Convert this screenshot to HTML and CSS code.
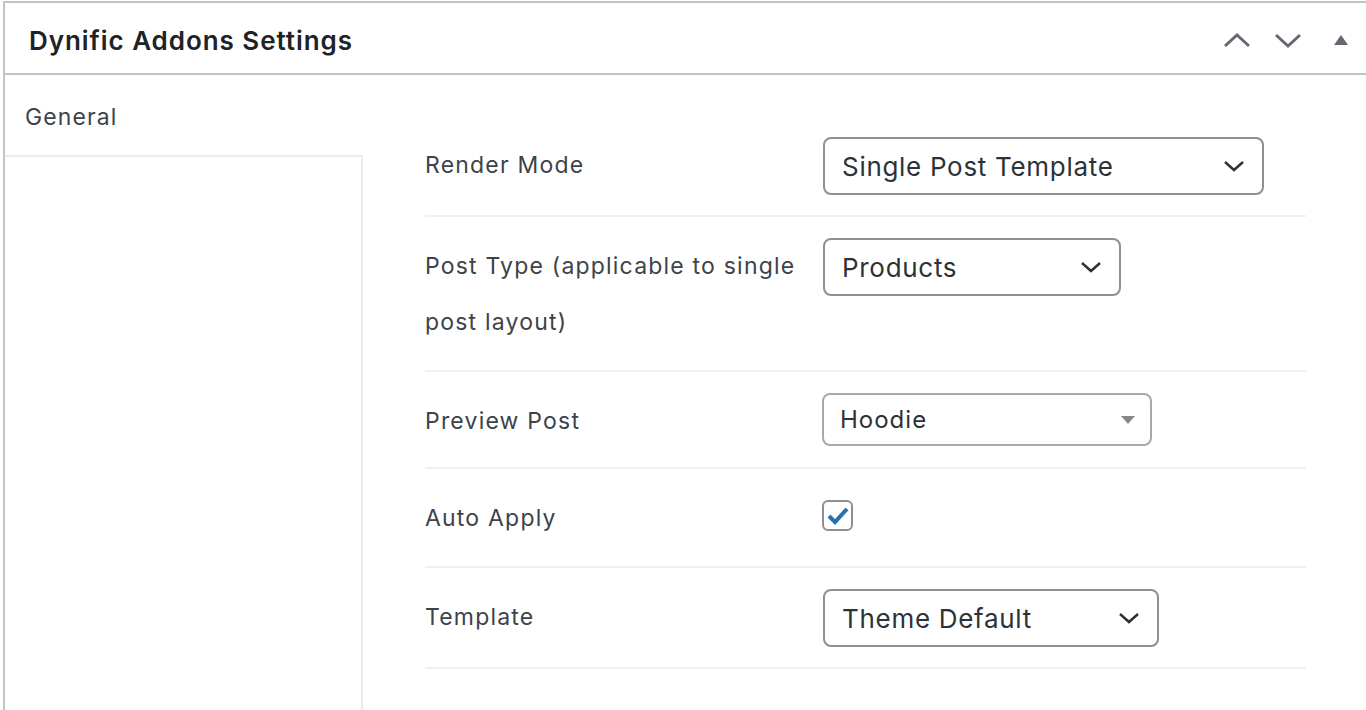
FILE: index.html
```html
<!DOCTYPE html>
<html lang="en">
<head>
  <meta charset="UTF-8">
  <meta name="viewport" content="width=device-width, initial-scale=1.0">
  <title>Dynific Addons Settings</title>
  <link rel="stylesheet" href="styles.css">
</head>
<body>
  <div class="postbox">
    <div class="postbox-header">
      <h2 class="postbox-title">Dynific Addons Settings</h2>
      <div class="handle-actions">
        <!-- move up / move down / toggle -->
        <svg class="handle" width="30" height="20" viewBox="0 0 30 20"><path d="M3 16 L15 5 L27 16" fill="none" stroke="#646970" stroke-width="3"/></svg>
        <svg class="handle" width="30" height="20" viewBox="0 0 30 20"><path d="M3 5 L15 16 L27 5" fill="none" stroke="#646970" stroke-width="3"/></svg>
        <svg class="handle toggle" width="18" height="20" viewBox="0 0 18 20"><path d="M2 15 L9 5 L16 15 Z" fill="#646970"/></svg>
      </div>
    </div>

    <div class="inside">
      <ul class="tabs">
        <li class="tab active">General</li>
        <li class="tabs-fill"></li>
      </ul>

      <div class="panel">
        <div class="field">
          <label class="field-label">Render Mode</label>
          <div class="field-input">
            <div class="select w-440">
              <span>Single Post Template</span>
              <svg width="22" height="14" viewBox="0 0 22 14"><path d="M2 3 L11 11 L20 3" fill="none" stroke="#2c3338" stroke-width="2.5"/></svg>
            </div>
          </div>
        </div>

        <div class="field">
          <label class="field-label">Post Type (applicable to single post layout)</label>
          <div class="field-input">
            <div class="select w-297">
              <span>Products</span>
              <svg width="22" height="14" viewBox="0 0 22 14"><path d="M2 3 L11 11 L20 3" fill="none" stroke="#2c3338" stroke-width="2.5"/></svg>
            </div>
          </div>
        </div>

        <div class="field field-short">
          <label class="field-label">Preview Post</label>
          <div class="field-input">
            <div class="select select2 w-329">
              <span>Hoodie</span>
              <svg width="16" height="10" viewBox="0 0 16 10"><path d="M1 1 L15 1 L8 9 Z" fill="#888888"/></svg>
            </div>
          </div>
        </div>

        <div class="field">
          <label class="field-label">Auto Apply</label>
          <div class="field-input">
            <span class="checkbox">
              <svg width="24" height="22" viewBox="0 0 24 22"><path d="M3 11 L9 17 L21 4" fill="none" stroke="#2271b1" stroke-width="4"/></svg>
            </span>
          </div>
        </div>

        <div class="field">
          <label class="field-label">Template</label>
          <div class="field-input">
            <div class="select w-335">
              <span>Theme Default</span>
              <svg width="22" height="14" viewBox="0 0 22 14"><path d="M2 3 L11 11 L20 3" fill="none" stroke="#2c3338" stroke-width="2.5"/></svg>
            </div>
          </div>
        </div>
      </div>
    </div>
  </div>
</body>
</html>
```

FILE: styles.css
```css
body, html {
  margin: 0;
  padding: 0;
  height: 100%;
  background: #fff;
  overflow: hidden;
  font-family: Inter, "Noto Sans", "Liberation Sans", sans-serif;
}
.postbox {
  display: flex;
  flex-direction: column;
  margin: 1px 0 0 3px;
  border: 2px solid #c3c4c7;
  border-right: none;
  border-bottom: none;
  height: calc(100% - 1px);
  box-sizing: border-box;
  overflow: hidden;
}
.postbox-header {
  display: flex;
  align-items: center;
  justify-content: space-between;
  flex-shrink: 0;
  height: 70px;
  border-bottom: 2px solid #c3c4c7;
}
.postbox-title {
  margin: 4px 0 0;
  padding-left: 24px;
  font-size: 26px;
  font-weight: 600;
  letter-spacing: 0.95px;
  color: #1d2327;
}
.handle-actions {
  display: flex;
  align-items: center;
  gap: 21px;
  padding: 4px 16px 0 0;
}
.handle.toggle {
  margin-left: 8px;
}
.inside {
  display: flex;
  flex: 1;
}
.tabs {
  list-style: none;
  margin: 0;
  padding: 0;
  width: 358px;
  display: flex;
  flex-direction: column;
}
.tab {
  height: 80px;
  line-height: 84px;
  padding-left: 20px;
  font-size: 23px;
  letter-spacing: 1.1px;
  color: #3c434a;
}
.tabs-fill {
  flex: 1;
  border-top: 2px solid #ececec;
  border-right: 2px solid #ececec;
}
.panel {
  flex: 1;
  padding: 41px 60px 0 62px;
}
.field {
  display: grid;
  grid-template-columns: 398px 1fr;
  padding: 21px 0 20px;
  border-bottom: 2px solid #f0f0f1;
}
.field.field-short {
  padding-bottom: 18px;
}
.field-label {
  font-size: 23px;
  line-height: 56px;
  letter-spacing: 1.2px;
  color: #3c434a;
  padding-right: 20px;
}
.field-input {
  display: flex;
  align-items: flex-start;
}
.select {
  display: flex;
  align-items: center;
  justify-content: space-between;
  height: 58px;
  box-sizing: border-box;
  border: 2px solid #8c8f94;
  border-radius: 8px;
  padding: 0 17px 0 17px;
  font-size: 26px;
  letter-spacing: 0.7px;
  color: #2c3338;
}
.select.select2 {
  height: 53px;
  margin-left: -1px;
  border-color: #a7aaad;
  font-size: 24px;
  letter-spacing: 1px;
  padding: 0 14px 0 16px;
}
.w-440 { width: 441px; }
.w-297 { width: 298px; }
.w-329 { width: 330px; }
.w-335 { width: 336px; }
.checkbox {
  display: flex;
  align-items: center;
  justify-content: center;
  width: 31px;
  height: 31px;
  margin-top: 10px;
  margin-left: -1px;
  box-sizing: border-box;
  border: 2px solid #8c8f94;
  border-radius: 6px;
}
```
